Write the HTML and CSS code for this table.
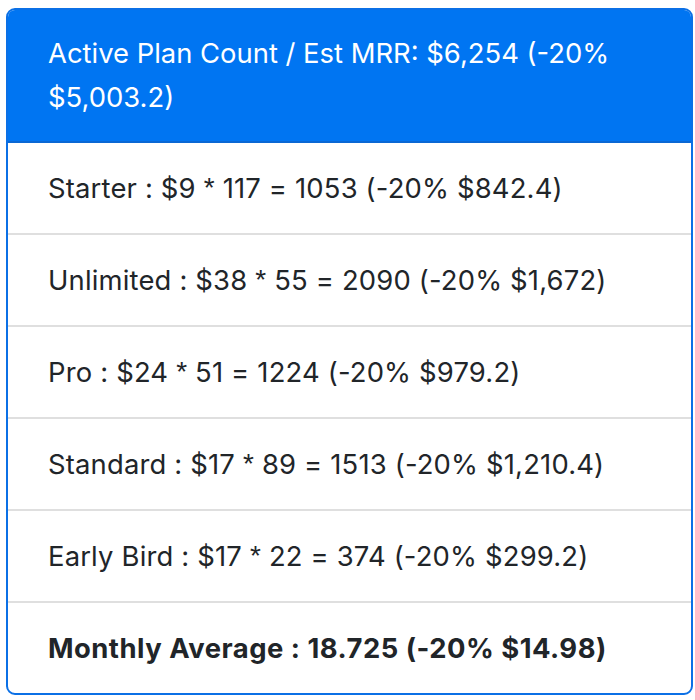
FILE: index.html
```html
<!DOCTYPE html>
<html>
<head>
<meta charset="utf-8">
<link rel="stylesheet" href="styles.css">
</head>
<body>
<div class="card">
  <div class="head">Active Plan Count / Est MRR: $6,254 (-20% $5,003.2)</div>
  <div class="row">Starter : $9 <span class="ast">*</span> 117 = 1053 (-20% $842.4)</div>
  <div class="row">Unlimited : $38 <span class="ast">*</span> 55 = 2090 (-20% $1,672)</div>
  <div class="row">Pro : $24 <span class="ast">*</span> 51 = 1224 (-20% $979.2)</div>
  <div class="row">Standard : $17 <span class="ast">*</span> 89 = 1513 (-20% $1,210.4)</div>
  <div class="row">Early Bird : $17 <span class="ast">*</span> 22 = 374 (-20% $299.2)</div>
  <div class="row last"><b>Monthly Average : 18.725 (-20% $14.98)</b></div>
</div>
</body>
</html>
```
FILE: styles.css
```css
html, body { margin: 0; padding: 0; background: #fff; }
body { font-family: Inter, "Noto Sans", sans-serif; color: #212529; }
.card {
  margin: 8px 0 0 6px;
  width: 687px;
  box-sizing: border-box;
  border: 2px solid #0b70e6;
  border-radius: 9px;
  overflow: hidden;
}
.head {
  background: #0075f2;
  color: #fff;
  font-size: 27.4px;
  line-height: 44px;
  padding: 21px 40px 22px 40px;
  border-bottom: 2px solid #0a68d4;
}
.row {
  height: 92px;
  box-sizing: border-box;
  display: flex;
  align-items: center;
  white-space: pre;
  padding: 0 40px;
  font-size: 27.4px;
  letter-spacing: 0.18px;
  border-bottom: 2px solid #dfdfdf;
}
.ast {
  font-family: "Liberation Sans", sans-serif;
  font-size: 28px;
  vertical-align: 2px;
}
.row.last { border-bottom: none; height: 90px; }
.row b { font-weight: 700; letter-spacing: 0.5px; }
```
